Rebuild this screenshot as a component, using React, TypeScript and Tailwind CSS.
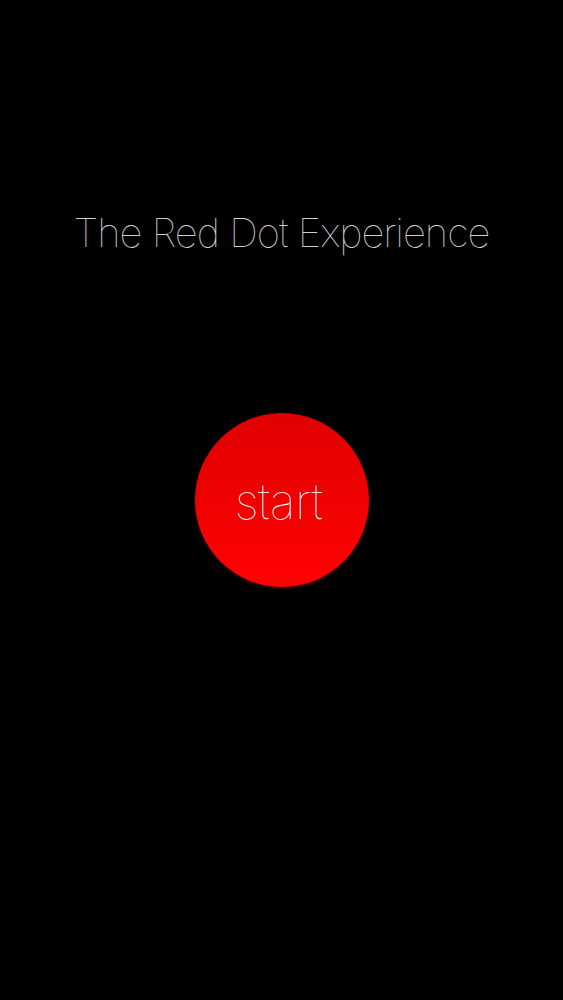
export default function App() {
  return (
    <main
      className="flex h-[1000px] w-full flex-col items-center bg-black"
      style={{ fontFamily: "Inter, 'Liberation Sans', sans-serif" }}
    >
      <h1 className="mt-[207px] text-[40px] font-thin leading-[52px] tracking-[-1px] text-[#d0d0d0]">
        The Red Dot Experience
      </h1>
      <button className="mt-[154px] flex h-[174px] w-[174px] items-center justify-center rounded-full bg-gradient-to-b from-[#e00000] to-[#ff0202] shadow-[0_2px_3px_rgba(90,0,0,0.6)]">
        <span className="mr-[6px] mt-[2px] text-[49px] font-thin leading-none tracking-[-0.5px] text-[#ffe4e4]">start</span>
      </button>
    </main>
  );
}
